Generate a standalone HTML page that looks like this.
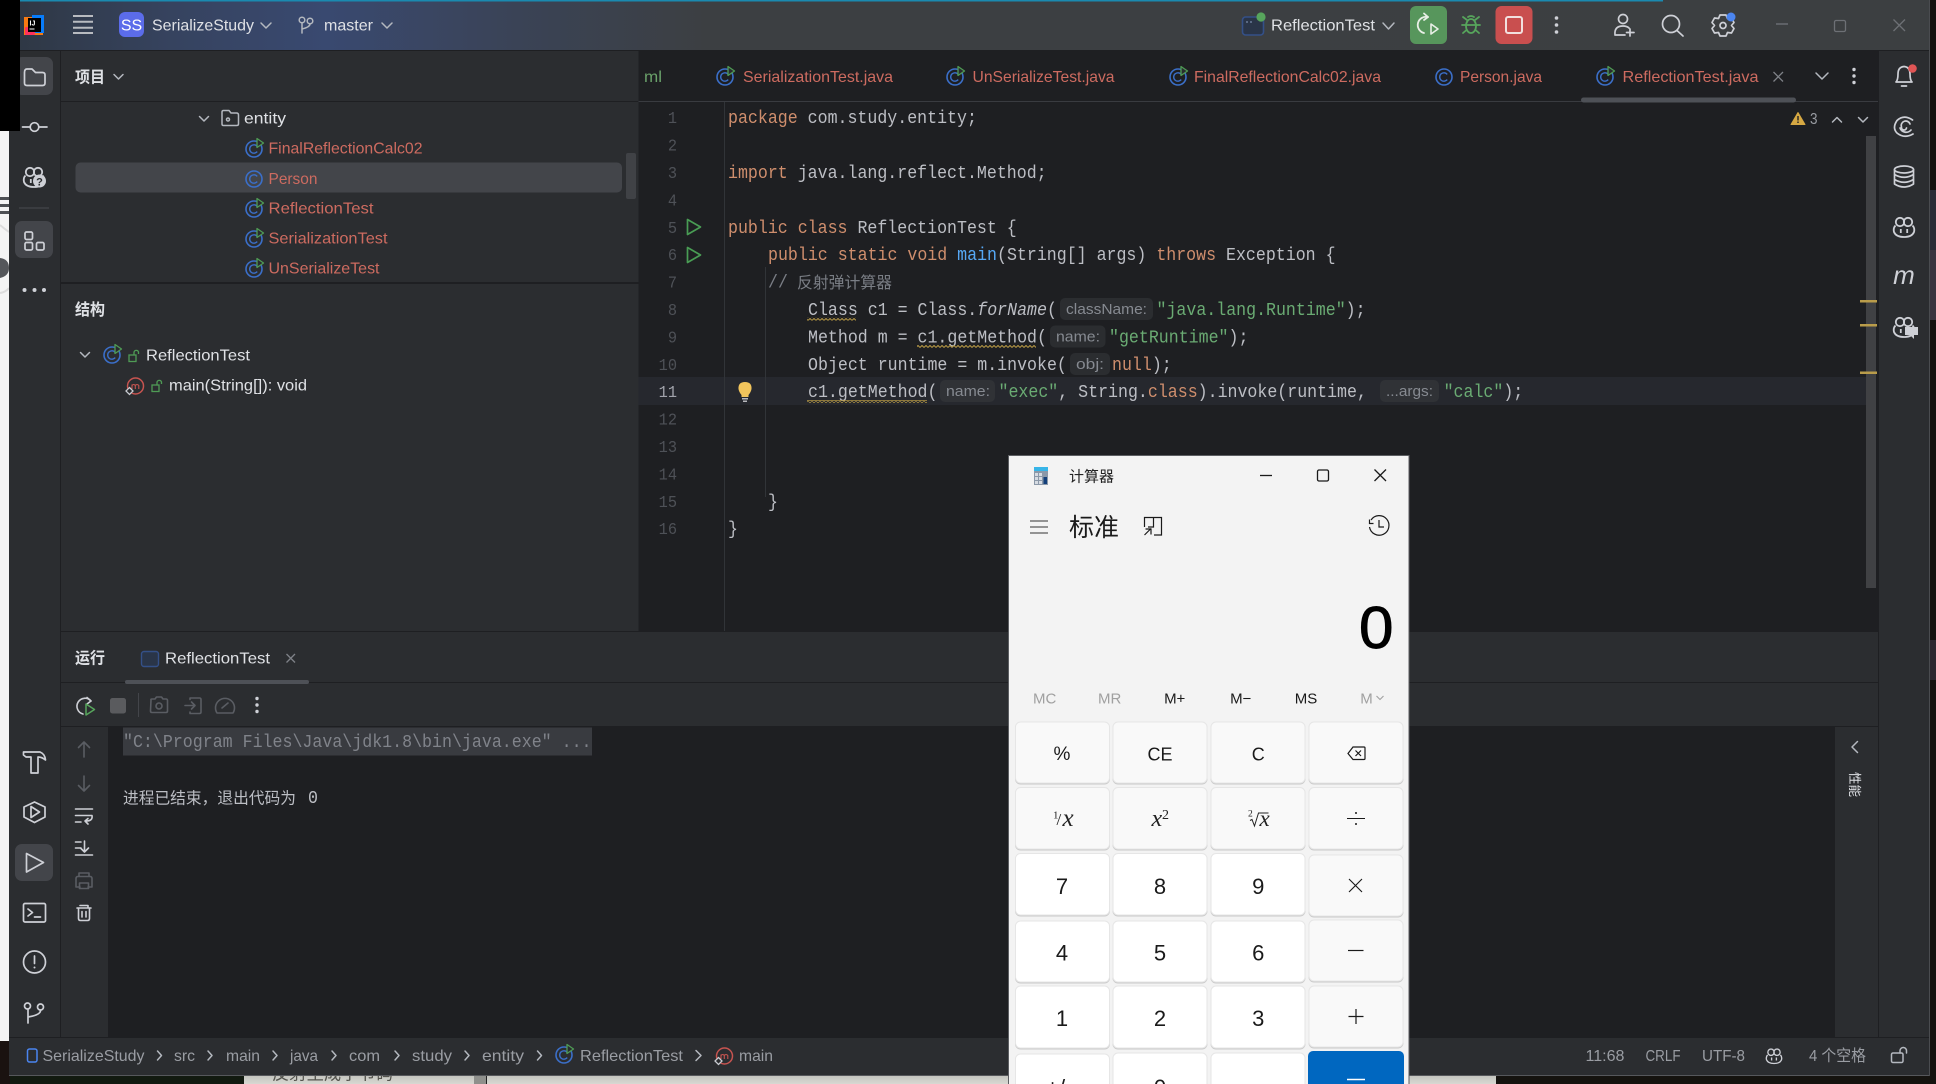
<!DOCTYPE html>
<html lang="zh">
<head>
<meta charset="utf-8">
<title>ReflectionTest</title>
<style>
html,body{margin:0;padding:0;background:#15130f;width:1936px;height:1084px;overflow:hidden}
svg{display:block}
text{white-space:pre;font-family:"Liberation Sans","Noto Sans CJK SC",sans-serif}
.m{font-family:"Liberation Mono","Noto Sans CJK SC",monospace;font-size:18.4px;fill:#bcbec4}
.k{fill:#cf8e6d}.s{fill:#6aab73}.f{fill:#56a8f5}
.n{font-family:"Liberation Mono",monospace;font-size:17px;fill:#4e5157;text-anchor:end}
.t{font-size:16px;fill:#dfe1e5}
.r{font-size:16px;fill:#cd6b60}
.h{font-size:15px;fill:#868a91}
.st{font-size:16px;fill:#9a9da3}
.cb{fill:#f9f9f9;stroke:#e6e6e6;stroke-width:1}
.cw{fill:#fff;stroke:#e6e6e6;stroke-width:1}
.d{font-size:22px;fill:#1a1a1a;text-anchor:middle}
.o{font-size:17px;fill:#1a1a1a;text-anchor:middle}
.mm{font-size:15px;text-anchor:middle;fill:#1a1a1a}
.md{fill:#a0a0a0}
.se{font-family:"Liberation Serif",serif;fill:#222}
.ic{fill:none;stroke:#ced0d6;stroke-width:1.7;stroke-linecap:round;stroke-linejoin:round}
.id{fill:none;stroke:#5a5d63;stroke-width:1.6;stroke-linecap:round;stroke-linejoin:round}
.i2{fill:none;stroke:#b4b8bf;stroke-width:1.5;stroke-linecap:round;stroke-linejoin:round}
.ci{fill:none;stroke:#1a1a1a;stroke-width:1.2}
</style>
</head>
<body>
<svg xmlns="http://www.w3.org/2000/svg" width="1936" height="1084" viewBox="0 0 1936 1084">
<defs>
<linearGradient id="tb" x1="0" y1="0" x2="1" y2="0" gradientUnits="objectBoundingBox">
<stop offset="0" stop-color="#2f3845"/><stop offset=".08" stop-color="#36435f"/><stop offset=".16" stop-color="#394970"/><stop offset=".26" stop-color="#3a4356"/><stop offset=".36" stop-color="#3c3f42"/><stop offset="1" stop-color="#3c3f41"/>
</linearGradient>
<pattern id="sq" width="4" height="3" patternUnits="userSpaceOnUse"><path d="M0 2.5L2 .5L4 2.5" stroke="#b89a45" fill="none" stroke-width="1"/></pattern>
<symbol id="cr" viewBox="0 0 20 22" width="20" height="22" overflow="visible">
<circle cx="9" cy="12" r="8" fill="none" stroke="#3b6fc9" stroke-width="1.6"/>
<path d="M12.2 9.4A4.2 4.2 0 1 0 12.2 14.6" fill="none" stroke="#3b6fc9" stroke-width="1.4"/>
<path d="M12 1.5L18.5 6L12 10.5Z" fill="#2a2c2f" stroke="#4f9b55" stroke-width="1.3" stroke-linejoin="round"/>
</symbol>
<symbol id="cc" viewBox="0 0 20 22" width="20" height="22" overflow="visible">
<circle cx="9" cy="12" r="8" fill="none" stroke="#3b6fc9" stroke-width="1.6"/>
<path d="M12.2 9.4A4.2 4.2 0 1 0 12.2 14.6" fill="none" stroke="#3b6fc9" stroke-width="1.4"/>
</symbol>
<symbol id="mi" viewBox="0 0 20 22" width="20" height="22" overflow="visible">
<circle cx="10.5" cy="10" r="8" fill="none" stroke="#c75450" stroke-width="1.5"/>
<path d="M7 13V8.5M7 9.5Q8.7 7.5 10.3 9.5V13M10.3 9.5Q12 7.5 13.8 9.5V13" fill="none" stroke="#c75450" stroke-width="1.1"/>
<path d="M4.5 11.5L8 15L4.5 18.5L1 15Z" fill="#2b2d30" stroke="#c9ccd2" stroke-width="1.3"/>
</symbol>
<symbol id="lk" viewBox="0 0 12 14" width="12" height="14" overflow="visible">
<rect x="1" y="6" width="7" height="6.5" fill="none" stroke="#4f9b55" stroke-width="1.3"/>
<path d="M6 6V3.5A2.3 2.3 0 0 1 10.5 3V5" fill="none" stroke="#4f9b55" stroke-width="1.3"/>
</symbol>
<symbol id="cop" viewBox="-12 -12 24 24" width="24" height="24" overflow="visible">
<g fill="none" stroke="#ced0d6" stroke-width="1.8">
<circle cx="-4" cy="-5" r="4.2"/><circle cx="4" cy="-5" r="4.2"/>
<path d="M-8.5 -1.5Q-11 1-10 5Q-8 10 0 10Q8 10 10 5Q11 1 8.5 -1.5"/>
</g>
<path d="M-3.2 2V6M3.2 2V6" stroke="#ced0d6" stroke-width="1.8" fill="none"/>
</symbol>
<symbol id="run" viewBox="0 0 16 18" width="16" height="18" overflow="visible">
<path d="M1.5 1.5L14.5 9L1.5 16.5Z" fill="none" stroke="#499c54" stroke-width="1.7" stroke-linejoin="round"/>
</symbol>
<linearGradient id="pg" x1="0" y1="0" x2="0" y2="1"><stop offset="0" stop-color="#c2c3bd"/><stop offset="1" stop-color="#d8d8d2"/></linearGradient>
</defs>

<!-- desktop behind -->
<rect width="1936" height="1084" fill="#15130f"/>
<rect x="0" y="131" width="10" height="910" fill="#f4f4f4"/>
<rect x="0" y="197" width="9" height="3" fill="#4e5054"/><rect x="0" y="204" width="9" height="3" fill="#4e5054"/><rect x="0" y="211" width="9" height="3" fill="#4e5054"/>
<path d="M0 258Q9 259 9 268Q9 276 0 278Z" fill="#55575b"/>
<path d="M0 225Q6 230 9 232M0 293Q6 292 9 288" stroke="#dcdcdc" fill="none" stroke-width="2"/>
<rect x="0" y="1041" width="10" height="43" fill="#1a1210"/>
<rect x="10" y="1075" width="234" height="9" fill="#121a10"/>
<rect x="244" y="1075" width="765" height="9" fill="url(#pg)"/>
<text x="272" y="1079.500" font-size="17" fill="#55554f" textLength="121" lengthAdjust="spacingAndGlyphs">反射生成字节码</text>
<rect x="474" y="1075" width="12" height="9" fill="#8f908c"/>
<rect x="486" y="1075" width="1" height="9" fill="#222" stroke-dasharray="2 1"/>
<rect x="1409" y="1075" width="87" height="9" fill="url(#pg)"/>
<rect x="1930" y="190" width="6" height="60" fill="#2a2c36"/><rect x="1930" y="250" width="6" height="70" fill="#3a3440"/><rect x="1930" y="640" width="6" height="40" fill="#2c2830"/>

<!-- IDE frame -->
<rect x="9" y="50" width="1920" height="1025" fill="#2b2d30"/>
<rect x="9" y="1075" width="1920" height="1" fill="#56585c"/>
<rect x="20" y="0" width="1909" height="50" fill="url(#tb)"/>
<rect x="20" y="0" width="1643" height="1.5" fill="#1a8ab0"/>
<rect x="1929" y="0" width="1" height="1076" fill="#4a4c50"/>
<rect x="0" y="0" width="20" height="131" fill="#000"/>
<rect x="20" y="50" width="1909" height="1" fill="#1e1f22"/>

<!-- title bar left -->
<rect x="24" y="17" width="19" height="18" fill="#f97a12"/>
<rect x="32" y="15" width="12" height="18" fill="#087cfa"/>
<rect x="25" y="27" width="10" height="8" rx="1" fill="#fe315d"/>
<rect x="28" y="18" width="13" height="14" fill="#000"/>
<text x="29.5" y="25.5" font-size="7" font-weight="bold" fill="#fff">IJ</text>
<rect x="29.5" y="28.5" width="5" height="1" fill="#fff"/>
<path d="M73 16H93M73 21.8H93M73 27.7H93M73 33H93" stroke="#b8bbc0" stroke-width="2"/>
<rect x="119" y="12" width="25" height="25" rx="6" fill="#5b6cea"/>
<text x="131.5" y="30.5" font-size="16" fill="#fff" text-anchor="middle">SS</text>
<text class="t" x="152" y="30.5" textLength="102" lengthAdjust="spacingAndGlyphs">SerializeStudy</text>
<path d="M261 23L266 28L271 23" class="i2"/>
<g class="i2"><circle cx="302" cy="20" r="2.8"/><circle cx="310" cy="21" r="2.8"/><path d="M302 23V33M310 24Q310 27 302 29"/></g>
<text class="t" x="324" y="30.5" textLength="49" lengthAdjust="spacingAndGlyphs">master</text>
<path d="M382 23L387 28L392 23" class="i2"/>

<!-- title bar right -->
<rect x="1242.5" y="17" width="21" height="18" rx="3" fill="#2a3548" stroke="#345088" stroke-width="1.6"/>
<rect x="1246" y="21" width="2" height="2" fill="#5a6a85"/><rect x="1250" y="21" width="2" height="2" fill="#5a6a85"/>
<circle cx="1261" cy="17" r="4.6" fill="#57a55c"/>
<text class="t" x="1271" y="30.5" textLength="104" lengthAdjust="spacingAndGlyphs">ReflectionTest</text>
<path d="M1383 23L1388.5 29L1394 23" class="i2" stroke-width="1.7"/>
<rect x="1410" y="6" width="37" height="38" rx="6" fill="#57965c"/>
<g fill="none" stroke="#e8efe6" stroke-width="1.8" stroke-linecap="round" stroke-linejoin="round">
<path d="M1428 17A8 8 0 1 0 1424 33"/><path d="M1424 13.500L1428 17L1424 20"/>
<path d="M1431 24L1438 29L1431 34Z" stroke-width="1.6"/>
</g>
<g fill="none" stroke="#57a55c" stroke-width="1.8" stroke-linecap="round">
<ellipse cx="1471" cy="26" rx="5" ry="7"/><path d="M1466 25H1476M1467 20L1463 17M1475 20L1479 17M1466 25H1462M1476 25H1480M1466.5 30L1463 33M1475.500 30L1479 33M1468 17Q1471 15 1474 17"/>
</g>
<rect x="1495.500" y="6" width="37" height="38" rx="6" fill="#c94f4f"/>
<rect x="1506" y="17" width="16" height="16" rx="2" fill="none" stroke="#f2e0df" stroke-width="2"/>
<g fill="#ced0d6"><circle cx="1556.500" cy="18" r="1.800"/><circle cx="1556.500" cy="25" r="1.800"/><circle cx="1556.500" cy="32" r="1.800"/></g>
<g class="ic" stroke-width="1.800"><circle cx="1623" cy="19" r="4.500"/><path d="M1615 35Q1614 26 1623 26Q1627 26 1629 28M1615 35H1625M1630 29V36M1626.500 32.500H1634"/></g>
<g class="ic" stroke-width="1.900"><circle cx="1671" cy="24" r="8.500"/><path d="M1677 30.500L1683 36"/></g>
<g class="ic" stroke-width="1.800"><path d="M1720 15L1726 15L1727.500 18.500L1731.500 18L1734 22.500L1731.500 25.500L1734 28.500L1731.500 33L1727.500 32.500L1726 36H1720L1718.500 32.500L1714.500 33L1712 28.500L1714.500 25.500L1712 22.500L1714.500 18L1718.500 18.500Z"/><circle cx="1723" cy="25.500" r="3"/></g>
<circle cx="1731" cy="17" r="4.500" fill="#4b85f0"/>
<path d="M1776 24H1788" stroke="#6d7075" stroke-width="1.400"/>
<rect x="1834.500" y="20.500" width="11" height="11" rx="1.500" fill="none" stroke="#6d7075" stroke-width="1.300"/>
<path d="M1893.500 19.500L1905 31M1905 19.500L1893.500 31" stroke="#6d7075" stroke-width="1.300"/>

<!-- left toolbar -->
<rect x="60" y="50" width="1" height="987" fill="#1e1f22"/>
<rect x="15" y="57" width="38" height="38" rx="7" fill="#43454a"/>
<rect x="0" y="50" width="20" height="81" fill="#000"/>
<path d="M24.500 72.500Q24.500 69 27 69H32L35.500 72.500H42.500Q45 72.500 45 75V83Q45 85.500 42.500 85.500H27Q24.500 85.500 24.500 83Z" class="ic"/>
<g class="ic"><circle cx="34.500" cy="127" r="4.300"/><path d="M22.500 127H30M39 127H47"/></g>
<use href="#cop" x="22" y="165"/>
<circle cx="39.500" cy="181" r="6.500" fill="#ced0d6"/>
<text x="39.500" y="185.500" font-size="11" font-weight="bold" fill="#2b2d30" text-anchor="middle">?</text>
<rect x="19" y="207" width="30" height="2" fill="#3a3c40"/>
<rect x="15" y="221" width="38" height="37" rx="7" fill="#43454a"/>
<g class="ic"><rect x="25" y="232" width="7.500" height="7.500" rx="1.500"/><rect x="25" y="242.500" width="7.500" height="7.500" rx="1.500"/><rect x="36.500" y="242.500" width="7.500" height="7.500" rx="1.500"/></g>
<g fill="#ced0d6"><circle cx="24.500" cy="290" r="2"/><circle cx="34.500" cy="290" r="2"/><circle cx="44" cy="290" r="2"/></g>

<g class="ic">
<path d="M23.500 752H40Q45 754 45.500 760Q42 757 38 757V773H31V757H26L23.500 755Z"/>
<path d="M34.500 802L45 807V817L34.500 822.500L24 817V807Z"/><path d="M31 806.500L39.500 812L31 817.500Z"/>
</g>
<rect x="15" y="844" width="38" height="37" rx="7" fill="#43454a"/>
<path d="M26.500 853.500L43.500 862.500L26.500 872Z" class="ic" stroke-width="1.800"/>
<g class="ic">
<rect x="23.500" y="903.500" width="22" height="18.500" rx="1.500"/><path d="M28 909L32.500 912.500L28 916M34.500 917H40.500"/>
<circle cx="34.500" cy="962" r="11"/><path d="M34.500 956V963.500"/>
<circle cx="27.500" cy="1006" r="3"/><circle cx="40.500" cy="1007" r="3"/><path d="M28 1009.500V1023M40.500 1010.500Q40.500 1015 28 1017"/>
</g>
<circle cx="34.500" cy="967.500" r="1" fill="#ced0d6"/>

<!-- project panel -->
<rect x="61" y="101" width="578" height="1" fill="#1e1f22"/>
<text class="t" x="75" y="82.500" textLength="30" lengthAdjust="spacingAndGlyphs" font-weight="bold">项目</text>
<path d="M114 74.500L118.500 79L123 74.500" class="i2"/>
<path d="M199.500 116.500L204 121L208.500 116.500" class="i2"/>
<path d="M222 112Q222 110.500 223.500 110.500H229L231 113H236.500Q238.500 113 238.500 115V124Q238.500 125.500 236.500 125.500H223.500Q222 125.500 222 124Z" class="i2" stroke="#9fa2a8"/>
<circle cx="228" cy="119.500" r="1.500" class="i2" stroke="#9fa2a8"/>
<text class="t" x="244" y="123.500" textLength="42" lengthAdjust="spacingAndGlyphs">entity</text>
<rect x="75.500" y="162.500" width="546.500" height="30" rx="5" fill="#43454a"/>
<use href="#cr" x="245" y="137"/><text class="r" x="268.500" y="153.500" textLength="154" lengthAdjust="spacingAndGlyphs">FinalReflectionCalc02</text>
<use href="#cc" x="245" y="167"/><text class="r" x="268.500" y="184" textLength="49" lengthAdjust="spacingAndGlyphs">Person</text>
<use href="#cr" x="245" y="197"/><text class="r" x="268.500" y="213.500" textLength="105" lengthAdjust="spacingAndGlyphs">ReflectionTest</text>
<use href="#cr" x="245" y="227"/><text class="r" x="268.500" y="243.500" textLength="119" lengthAdjust="spacingAndGlyphs">SerializationTest</text>
<use href="#cr" x="245" y="257"/><text class="r" x="268.500" y="273.500" textLength="111" lengthAdjust="spacingAndGlyphs">UnSerializeTest</text>
<rect x="626" y="153" width="10" height="46" rx="2" fill="#404246"/>
<rect x="61" y="282" width="578" height="2" fill="#1e1f22"/>
<text class="t" x="75" y="315" textLength="30" lengthAdjust="spacingAndGlyphs" font-weight="bold">结构</text>
<path d="M80.500 352.500L85 357L89.500 352.500" class="i2"/>
<use href="#cr" x="103" y="343"/>
<use href="#lk" x="128" y="349"/>
<text class="t" x="146" y="360.500" textLength="104" lengthAdjust="spacingAndGlyphs">ReflectionTest</text>
<use href="#mi" x="125" y="376"/>
<use href="#lk" x="151" y="379"/>
<text class="t" x="169" y="390.500" textLength="138" lengthAdjust="spacingAndGlyphs">main(String[]): void</text>

<!-- editor -->
<rect x="638.500" y="51" width="1239.500" height="581" fill="#1e1f22"/>
<rect x="638.500" y="101" width="1239.500" height="1" fill="#393b40"/>
<text x="644" y="82" font-size="16" fill="#6aa16a" textLength="18" lengthAdjust="spacingAndGlyphs">ml</text>
<use href="#cr" x="716" y="65"/><text class="r" x="743" y="82" textLength="150" lengthAdjust="spacingAndGlyphs">SerializationTest.java</text>
<use href="#cr" x="946" y="65"/><text class="r" x="972.500" y="82" textLength="142" lengthAdjust="spacingAndGlyphs">UnSerializeTest.java</text>
<use href="#cr" x="1169" y="65"/><text class="r" x="1194" y="82" textLength="187" lengthAdjust="spacingAndGlyphs">FinalReflectionCalc02.java</text>
<use href="#cc" x="1435" y="65"/><text class="r" x="1460" y="82" textLength="82" lengthAdjust="spacingAndGlyphs">Person.java</text>
<use href="#cr" x="1596" y="65"/><text class="r" x="1622.500" y="82" textLength="136" lengthAdjust="spacingAndGlyphs">ReflectionTest.java</text>
<path d="M1773.500 72L1783 81.500M1783 72L1773.500 81.500" stroke="#7f8288" stroke-width="1.300"/>
<rect x="1581" y="97.500" width="215" height="5" rx="2.500" fill="#4e5157"/>
<path d="M1816 73L1822 79L1828 73" class="i2" stroke="#c9ccd2" stroke-width="1.600"/>
<g fill="#ced0d6"><circle cx="1854" cy="69.500" r="1.700"/><circle cx="1854" cy="76" r="1.700"/><circle cx="1854" cy="82.500" r="1.700"/></g>

<rect x="638.500" y="377" width="1234.500" height="28" fill="#26282e"/>
<rect x="724" y="102" width="1" height="530" fill="#313438"/>
<rect x="765" y="267" width="1" height="230" fill="#313438"/>

<g>
<text class="n" transform="translate(677 123.200) scale(.9 1)">1</text>
<text class="n" transform="translate(677 150.600) scale(.9 1)">2</text>
<text class="n" transform="translate(677 178) scale(.9 1)">3</text>
<text class="n" transform="translate(677 205.400) scale(.9 1)">4</text>
<text class="n" transform="translate(677 232.800) scale(.9 1)">5</text>
<text class="n" transform="translate(677 260.200) scale(.9 1)">6</text>
<text class="n" transform="translate(677 287.600) scale(.9 1)">7</text>
<text class="n" transform="translate(677 315) scale(.9 1)">8</text>
<text class="n" transform="translate(677 342.400) scale(.9 1)">9</text>
<text class="n" transform="translate(677 369.800) scale(.9 1)">10</text>
<text class="n" transform="translate(677 397.200) scale(.9 1)" style="fill:#a1a3ab">11</text>
<text class="n" transform="translate(677 424.600) scale(.9 1)">12</text>
<text class="n" transform="translate(677 452) scale(.9 1)">13</text>
<text class="n" transform="translate(677 479.400) scale(.9 1)">14</text>
<text class="n" transform="translate(677 506.800) scale(.9 1)">15</text>
<text class="n" transform="translate(677 534.200) scale(.9 1)">16</text>
</g>

<use href="#run" x="686" y="218"/>
<use href="#run" x="686" y="246"/>

<path d="M745 382Q738 382 738.500 389Q739 392 741.500 395V397H748.500V395Q751 392 751.500 389Q752 382 745 382Z" fill="#f2c55c"/>
<rect x="742" y="398" width="6" height="1.500" fill="#b8b9bd"/><rect x="743" y="400.500" width="4" height="1.500" fill="#b8b9bd"/>

<text class="m" transform="translate(728 123.200) scale(.902 1)"><tspan class="k">package</tspan> com.study.entity;</text>
<text class="m" transform="translate(728 178) scale(.902 1)"><tspan class="k">import</tspan> java.lang.reflect.Method;</text>
<text class="m" transform="translate(728 232.800) scale(.902 1)"><tspan class="k">public class</tspan> ReflectionTest {</text>
<text class="m" transform="translate(768 260.200) scale(.902 1)"><tspan class="k">public static void</tspan> <tspan class="f">main</tspan>(String[] args) <tspan class="k">throws</tspan> Exception {</text>
<text class="m" transform="translate(768 287.600) scale(.902 1)" style="fill:#7a7e85">//</text>
<text x="797" y="288" font-size="16" fill="#7a7e85" textLength="95" lengthAdjust="spacingAndGlyphs">反射弹计算器</text>

<text class="m" transform="translate(808 315) scale(.902 1)">Class c1 = Class.<tspan font-style="italic">forName</tspan>(</text>
<rect x="1060" y="298" width="93" height="22" rx="5" fill="#2b2d30"/>
<text class="h" x="1066" y="314" textLength="81" lengthAdjust="spacingAndGlyphs">className:</text>
<text class="m" transform="translate(1156.500 315) scale(.902 1)"><tspan class="s">"java.lang.Runtime"</tspan>);</text>
<rect x="807" y="317.500" width="49" height="3" fill="url(#sq)"/>

<text class="m" transform="translate(808 342.400) scale(.902 1)">Method m = c1.getMethod(</text>
<rect x="1050" y="325.500" width="55.500" height="22" rx="5" fill="#2b2d30"/>
<text class="h" x="1056" y="341.500" textLength="44" lengthAdjust="spacingAndGlyphs">name:</text>
<text class="m" transform="translate(1109 342.400) scale(.902 1)"><tspan class="s">"getRuntime"</tspan>);</text>
<rect x="917" y="345" width="119" height="3" fill="url(#sq)"/>

<text class="m" transform="translate(808 369.800) scale(.902 1)">Object runtime = m.invoke(</text>
<rect x="1070" y="353" width="40" height="22" rx="5" fill="#2b2d30"/>
<text class="h" x="1076" y="369" textLength="28" lengthAdjust="spacingAndGlyphs">obj:</text>
<text class="m" transform="translate(1112 369.800) scale(.902 1)"><tspan class="k">null</tspan>);</text>

<text class="m" transform="translate(808 397.200) scale(.902 1)">c1.getMethod(</text>
<rect x="940" y="380" width="55" height="22" rx="5" fill="#303236"/>
<text class="h" x="946" y="396" textLength="44" lengthAdjust="spacingAndGlyphs">name:</text>
<text class="m" transform="translate(998.500 397.200) scale(.902 1)"><tspan class="s">"exec"</tspan>, String.<tspan class="k">class</tspan>).invoke(runtime,</text>
<rect x="1380" y="380" width="59" height="22" rx="5" fill="#303236"/>
<text class="h" x="1386" y="396" textLength="47" lengthAdjust="spacingAndGlyphs">...args:</text>
<text class="m" transform="translate(1443.600 397.200) scale(.902 1)"><tspan class="s">"calc"</tspan>);</text>
<rect x="807" y="400" width="120" height="3" fill="url(#sq)"/>

<text class="m" transform="translate(768 506.800) scale(.902 1)">}</text>
<text class="m" transform="translate(728 534.200) scale(.902 1)">}</text>

<path d="M1798 112.500L1805 124.500H1791Z" fill="#d6a843" stroke="#d6a843" stroke-linejoin="round"/>
<rect x="1797.300" y="116" width="1.400" height="4.500" fill="#1e1f22"/><rect x="1797.300" y="121.500" width="1.400" height="1.500" fill="#1e1f22"/>
<text x="1810" y="124" font-size="16" fill="#9a9da3" textLength="7.500" lengthAdjust="spacingAndGlyphs">3</text>
<path d="M1832.500 122L1837 117.500L1841.500 122" class="i2"/>
<path d="M1858.500 117.500L1863 122L1867.500 117.500" class="i2"/>
<rect x="1866" y="136" width="10" height="452" fill="#404144"/>
<rect x="1860" y="300" width="17" height="2.500" fill="#b99c4a"/>
<rect x="1860" y="324" width="17" height="2.500" fill="#b99c4a"/>
<rect x="1860" y="371.500" width="17" height="2.500" fill="#b99c4a"/>

<!-- right toolbar -->
<rect x="1878" y="50" width="1" height="987" fill="#1e1f22"/>
<g class="ic">
<path d="M1896 82Q1898 80 1898 74Q1898 67 1904 66.500Q1910 67 1910 74Q1910 80 1912 82Z"/><path d="M1901.500 86H1906.500"/>
<path d="M1906.500 128A2.500 2.500 0 0 1 1901.500 127A4.500 4.500 0 0 1 1910 124M1912.500 120Q1904 114 1897 120.500Q1892 128 1897 133Q1904 139 1913 134M1900 128A6.500 6.500 0 0 0 1911 130"/>
<ellipse cx="1904" cy="169.500" rx="9.500" ry="3.500"/><path d="M1894.500 169.500V184Q1904 190 1913.500 184V169.500M1894.500 174.500Q1904 180 1913.500 174.500M1894.500 179.500Q1904 185 1913.500 179.500"/>
</g>
<circle cx="1912.500" cy="68.500" r="4.300" fill="#e05555"/>
<use href="#cop" x="1892" y="215"/>
<text x="1904" y="284" font-size="26" font-style="italic" fill="#ced0d6" text-anchor="middle">m</text>
<use href="#cop" x="1892" y="315"/>
<path d="M1905 327H1918V335H1914V339L1910 335H1905Z" fill="#ced0d6"/>

<!-- bottom tool window -->
<rect x="61" y="631" width="1817" height="1" fill="#1e1f22"/>
<text class="t" x="75" y="663.500" textLength="30" lengthAdjust="spacingAndGlyphs" font-weight="bold">运行</text>
<rect x="141.500" y="651.500" width="17" height="15" rx="2.500" fill="#2a3548" stroke="#345088" stroke-width="1.400"/>
<text class="t" x="165" y="663.500" textLength="105" lengthAdjust="spacingAndGlyphs">ReflectionTest</text>
<path d="M286.500 654L295 662.500M295 654L286.500 662.500" stroke="#7f8288" stroke-width="1.300"/>
<rect x="61" y="682" width="1817" height="1" fill="#1e1f22"/>
<rect x="125" y="680" width="184" height="4" rx="2" fill="#4e5157"/>

<g fill="none" stroke="#ced0d6" stroke-width="1.600" stroke-linecap="round" stroke-linejoin="round"><path d="M91 701A8 8 0 1 0 83 714"/><path d="M87 697.500L91 701L87 704"/></g>
<path d="M86 704L94.500 709.500L86 715Z" fill="none" stroke="#57a55c" stroke-width="1.500" stroke-linejoin="round"/>
<rect x="110" y="698" width="16" height="15.500" rx="2.500" fill="#5a5b5e"/>
<rect x="138" y="693" width="1" height="24" fill="#43454a"/>
<g class="id">
<path d="M151 700Q150.500 699 152 699H155L156.500 697H161.500L163 699H166Q167.500 699 167.500 700.500V711Q167.500 712.500 166 712.500H152Q150.500 712.500 150.500 711Z"/><circle cx="159" cy="706" r="3"/>
<path d="M190 699.500V698H199.500Q201 698 201 699.500V712Q201 713.500 199.500 713.500H190V712M185 705.500H194.500M191.500 702L195 705.500L191.500 709"/>
<path d="M217 713A9.500 9.500 0 1 1 233 713H217ZM222 708L228 703"/>
</g>
<g fill="#ced0d6"><circle cx="257" cy="698.500" r="1.700"/><circle cx="257" cy="705" r="1.700"/><circle cx="257" cy="711.500" r="1.700"/></g>

<rect x="61" y="726" width="1817" height="1" fill="#1e1f22"/>
<rect x="108" y="727" width="1727" height="310" fill="#1e1f22"/>
<g class="id">
<path d="M84 742V757M78.500 747.500L84 742L89.500 747.500"/>
<path d="M84 776V791M78.500 785.500L84 791L89.500 785.500"/>
<path d="M75.500 809H92.500M75.500 815.500H92Q93 821 86 821M88 818.500L85 821L88 824M75.500 822H81" stroke="#ced0d6"/>
<path d="M75.500 842H81M75.500 848H81M84.500 841V852M80.500 848L84.500 852L88.500 848M75.500 855H92.500" stroke="#ced0d6"/>
<path d="M79 876V873H89V876M76 887V878.500Q76 876.500 78 876.500H90Q92 876.500 92 878.500V887H88M80 887H76M79.500 883H88.500V888.500H79.500Z"/>
<path d="M77 908H91M80 905.500H88V908M78.500 908V918.500Q78.500 920.500 80.500 920.500H87.500Q89.500 920.500 89.500 918.500V908M82 911.500V917M86 911.500V917" stroke="#ced0d6"/>
</g>

<rect x="123" y="727.500" width="469" height="28" fill="#393b40"/>
<text class="m" transform="translate(123 747.200) scale(.904 1)" style="fill:#80838a">"C:\Program Files\Java\jdk1.8\bin\java.exe" ...</text>
<text x="123" y="803.500" font-size="16" fill="#bcbec4" textLength="173" lengthAdjust="spacingAndGlyphs">进程已结束，退出代码为</text>
<text class="m" transform="translate(308 803.200) scale(.902 1)">0</text>

<rect x="1835" y="727" width="43" height="310" fill="#2b2d30"/>
<path d="M1857.500 741.500L1852 747L1857.500 752.500" class="i2" stroke="#9fa2a8" stroke-width="1.800"/>
<text transform="translate(1850 772) rotate(90) scale(1 .95)" font-size="14" fill="#dfe1e5" textLength="25" lengthAdjust="spacingAndGlyphs">性能</text>

<!-- status bar -->
<rect x="9" y="1037" width="1920" height="1" fill="#1e1f22"/>
<rect x="27.500" y="1049" width="9.500" height="13" rx="2" fill="none" stroke="#4b85f0" stroke-width="1.500"/>
<text class="st" x="42.500" y="1061" textLength="102" lengthAdjust="spacingAndGlyphs">SerializeStudy</text>
<text class="st" x="174" y="1061" textLength="21" lengthAdjust="spacingAndGlyphs">src</text>
<text class="st" x="226" y="1061" textLength="34" lengthAdjust="spacingAndGlyphs">main</text>
<text class="st" x="290" y="1061" textLength="28" lengthAdjust="spacingAndGlyphs">java</text>
<text class="st" x="349" y="1061" textLength="31" lengthAdjust="spacingAndGlyphs">com</text>
<text class="st" x="412" y="1061" textLength="40" lengthAdjust="spacingAndGlyphs">study</text>
<text class="st" x="482" y="1061" textLength="42" lengthAdjust="spacingAndGlyphs">entity</text>
<g class="i2" stroke="#9fa2a8">
<path d="M157.500 1051L161.500 1055.500L157.500 1060"/><path d="M208 1051L212 1055.500L208 1060"/><path d="M273 1051L277 1055.500L273 1060"/><path d="M332 1051L336 1055.500L332 1060"/><path d="M395 1051L399 1055.500L395 1060"/><path d="M465 1051L469 1055.500L465 1060"/><path d="M537.500 1051L541.500 1055.500L537.500 1060"/><path d="M696 1050.500L701 1055.500L696 1060.500"/>
</g>
<use href="#cr" x="555" y="1043"/>
<text class="st" x="580" y="1061" textLength="103" lengthAdjust="spacingAndGlyphs">ReflectionTest</text>
<use href="#mi" x="714" y="1046"/>
<text class="st" x="739" y="1061" textLength="34" lengthAdjust="spacingAndGlyphs">main</text>
<text class="st" x="1585.500" y="1061" textLength="39" lengthAdjust="spacingAndGlyphs">11:68</text>
<text class="st" x="1645.500" y="1061" textLength="35" lengthAdjust="spacingAndGlyphs">CRLF</text>
<text class="st" x="1702" y="1061" textLength="43" lengthAdjust="spacingAndGlyphs">UTF-8</text>
<g transform="translate(1765 1047) scale(.75)"><use href="#cop" x="0" y="0"/></g>
<text class="st" x="1809" y="1061" textLength="57" lengthAdjust="spacingAndGlyphs">4 个空格</text>
<g class="i2"><rect x="1891.500" y="1053" width="11.500" height="9.500" rx="1.500"/><path d="M1900 1053V1050.500A3 3 0 0 1 1906.500 1051V1053"/></g>

<!-- calculator -->
<rect x="1008.500" y="455.500" width="400.500" height="632" fill="#f3f3f3" stroke="#5c5e62"/>
<rect x="1034" y="467" width="14" height="18" fill="#8b98a8"/>
<rect x="1034" y="467" width="14" height="4" fill="#37b5e8"/>
<g fill="#d6dbe2"><rect x="1035" y="473" width="3" height="3"/><rect x="1039" y="473" width="3" height="3"/><rect x="1035" y="477" width="3" height="3"/><rect x="1039" y="477" width="3" height="3"/><rect x="1035" y="481" width="3" height="3"/><rect x="1039" y="481" width="3" height="3"/></g>
<rect x="1043.500" y="477" width="3.500" height="7" fill="#123f7a"/>
<text x="1069" y="481.500" font-size="15" fill="#222" textLength="45" lengthAdjust="spacingAndGlyphs">计算器</text>
<path d="M1260 475.500H1272" stroke="#1a1a1a" stroke-width="1.300"/>
<rect x="1317.500" y="470" width="11" height="11" rx="1.500" fill="none" stroke="#1a1a1a" stroke-width="1.300"/>
<path d="M1374.500 469.500L1386 481M1386 469.500L1374.500 481" stroke="#1a1a1a" stroke-width="1.300"/>
<path d="M1030 521H1048M1030 527H1048M1030 533H1048" stroke="#333" stroke-width="1.100"/>
<text x="1069" y="536" font-size="25" fill="#1a1a1a" textLength="50" lengthAdjust="spacingAndGlyphs">标准</text>
<g class="ci"><path d="M1144.500 527V517.500H1161.500V535H1154M1153.500 517.500V527H1148M1144.500 535L1151 528.500M1145.500 529H1151V534.500"/></g>
<g class="ci"><path d="M1371 520A9.800 9.800 0 1 1 1369.500 527M1369.500 519.500V523.500H1373.500M1379 520V527H1384"/></g>
<text transform="translate(1393.500 648) scale(1.050 1)" font-size="59" fill="#000" text-anchor="end" stroke="#000" stroke-width=".9">0</text>
<text class="mm md" x="1044.700" y="703.500">MC</text>
<text class="mm md" x="1109.700" y="703.500">MR</text>
<text class="mm" x="1174.700" y="703.500">M+</text>
<text class="mm" x="1240.700" y="703.500">M−</text>
<text class="mm" x="1306" y="703.500">MS</text>
<text class="mm md" x="1366.500" y="703.500">M</text>
<path d="M1376.500 696L1380 699.500L1383.500 696" fill="none" stroke="#a0a0a0" stroke-width="1.100"/>

<g style="filter:drop-shadow(0 1px 0 #c9c9c9)">
<rect class="cb" x="1015.500" y="722" width="94" height="61" rx="5"/><rect class="cb" x="1113" y="722" width="94" height="61" rx="5"/><rect class="cb" x="1211" y="722" width="94" height="61" rx="5"/><rect class="cb" x="1309" y="722" width="94" height="61" rx="5"/>
<rect class="cb" x="1015.500" y="787.500" width="94" height="61.500" rx="5"/><rect class="cb" x="1113" y="787.500" width="94" height="61.500" rx="5"/><rect class="cb" x="1211" y="787.500" width="94" height="61.500" rx="5"/><rect class="cb" x="1309" y="787.500" width="94" height="61.500" rx="5"/>
<rect class="cw" x="1015.500" y="853.500" width="94" height="61.500" rx="5"/><rect class="cw" x="1113" y="853.500" width="94" height="61.500" rx="5"/><rect class="cw" x="1211" y="853.500" width="94" height="61.500" rx="5"/><rect class="cb" x="1309" y="855" width="94" height="61" rx="5"/>
<rect class="cw" x="1015.500" y="921" width="94" height="61" rx="5"/><rect class="cw" x="1113" y="921" width="94" height="61" rx="5"/><rect class="cw" x="1211" y="921" width="94" height="61" rx="5"/><rect class="cb" x="1309" y="920" width="94" height="61" rx="5"/>
<rect class="cw" x="1015.500" y="986" width="94" height="62" rx="5"/><rect class="cw" x="1113" y="986" width="94" height="62" rx="5"/><rect class="cw" x="1211" y="986" width="94" height="62" rx="5"/><rect class="cb" x="1309" y="986" width="94" height="61" rx="5"/>
<rect class="cw" x="1015.500" y="1054" width="94" height="60" rx="5"/><rect class="cw" x="1113" y="1053" width="94" height="60" rx="5"/><rect class="cw" x="1211" y="1053" width="94" height="60" rx="5"/>
</g>
<rect x="1308" y="1051" width="96" height="60" rx="5" fill="#0067c0"/>

<text class="o" x="1062" y="760" style="font-size:19px">%</text>
<text class="o" x="1160" y="760.500" style="font-size:18px">CE</text>
<text class="o" x="1258.300" y="760.500" style="font-size:18px">C</text>
<g fill="none" stroke="#1a1a1a" stroke-width="1.200"><path d="M1353 747H1364Q1365 747 1365 748V758.500Q1365 759.500 1364 759.500H1353L1348 753.500Z"/><path d="M1355.500 750.500L1361 756M1361 750.500L1355.500 756"/></g>

<text class="se" x="1053" y="818.500" font-size="11">1</text>
<text class="se" x="1056.500" y="825" font-size="17">/</text>
<text class="se" x="1062.500" y="826" font-size="25" font-style="italic">x</text>
<text class="se" x="1151.500" y="826" font-size="24" font-style="italic">x</text>
<text class="se" x="1162" y="819" font-size="14">2</text>
<text class="se" x="1248" y="816.500" font-size="9.500">2</text>
<path d="M1250 820.500L1252 819.500L1254.500 826L1258.500 813H1268.500" fill="none" stroke="#222" stroke-width="1"/>
<text class="se" x="1259.500" y="826" font-size="23" font-style="italic">x</text>
<path d="M1347 818.500H1365" stroke="#1a1a1a" stroke-width="1.100"/><circle cx="1356" cy="813" r="1" fill="#1a1a1a"/><circle cx="1356" cy="824" r="1" fill="#1a1a1a"/>

<text class="d" x="1062" y="894">7</text><text class="d" x="1160" y="894">8</text><text class="d" x="1258.300" y="894">9</text>
<path d="M1349 879L1362 892M1362 879L1349 892" stroke="#1a1a1a" stroke-width="1.100"/>
<text class="d" x="1062" y="960.500">4</text><text class="d" x="1160" y="960.500">5</text><text class="d" x="1258.300" y="960.500">6</text>
<path d="M1348 950.500H1363.500" stroke="#1a1a1a" stroke-width="1.200"/>
<text class="d" x="1062" y="1026">1</text><text class="d" x="1160" y="1026">2</text><text class="d" x="1258.300" y="1026">3</text>
<path d="M1348.500 1016.500H1363.500M1356 1009V1024" stroke="#1a1a1a" stroke-width="1.200"/>
<text class="d" x="1062" y="1095">+/−</text><text class="d" x="1160" y="1095">0</text>
<path d="M1347 1079.500H1365" stroke="#fff" stroke-width="1.400"/>
</svg>
</body>
</html>
